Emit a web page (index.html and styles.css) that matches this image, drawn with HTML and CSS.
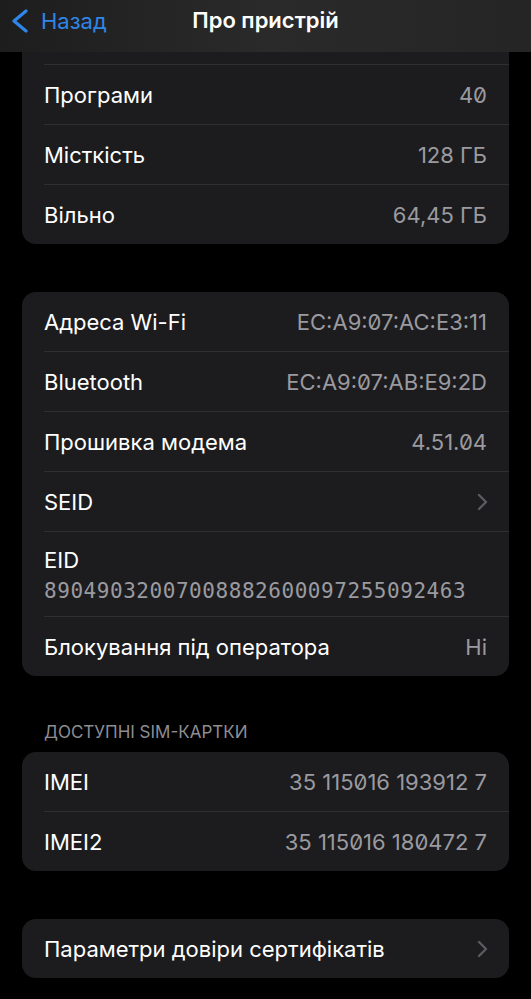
FILE: index.html
```html
<!DOCTYPE html>
<html lang="uk">
<head>
  <meta charset="UTF-8">
  <title>Про пристрій</title>
  <link rel="stylesheet" href="styles.css">
</head>
<body>
  <div class="navbar">
    <a class="back" href="#">
      <svg class="back-icon" width="18" height="24" viewBox="0 0 18 24">
        <path d="M15 2 L3 12 L15 22" fill="none" stroke="#2f86e8" stroke-width="3.2" stroke-linecap="round" stroke-linejoin="round"/>
      </svg>
      <span>Назад</span>
    </a>
    <div class="title">Про пристрій</div>
  </div>

  <div class="group first">
    <div class="stub"></div>
    <div class="row"><div class="inner"><span class="label">Програми</span><span class="value">40</span></div></div>
    <div class="row"><div class="inner"><span class="label">Місткість</span><span class="value">128 ГБ</span></div></div>
    <div class="row"><div class="inner"><span class="label">Вільно</span><span class="value">64,45 ГБ</span></div></div>
  </div>

  <div class="group">
    <div class="row"><div class="inner"><span class="label">Адреса Wi-Fi</span><span class="value">EC:A9:07:AC:E3:11</span></div></div>
    <div class="row"><div class="inner"><span class="label">Bluetooth</span><span class="value">EC:A9:07:AB:E9:2D</span></div></div>
    <div class="row"><div class="inner"><span class="label">Прошивка модема</span><span class="value">4.51.04</span></div></div>
    <div class="row"><div class="inner"><span class="label">SEID</span><span class="chevron"><svg width="12" height="18" viewBox="0 0 12 18"><path d="M3 2 L10 9 L3 16" fill="none" stroke="#5b5b60" stroke-width="2.4" stroke-linecap="round" stroke-linejoin="round"/></svg></span></div></div>
    <div class="row tall"><div class="inner stack"><span class="label">EID</span><span class="eid">89049032007008882600097255092463</span></div></div>
    <div class="row"><div class="inner"><span class="label">Блокування під оператора</span><span class="value">Ні</span></div></div>
  </div>

  <div class="section-title">ДОСТУПНІ SIM-КАРТКИ</div>
  <div class="group sim">
    <div class="row"><div class="inner"><span class="label">IMEI</span><span class="value">35 115016 193912 7</span></div></div>
    <div class="row"><div class="inner"><span class="label">IMEI2</span><span class="value">35 115016 180472 7</span></div></div>
  </div>

  <div class="group">
    <div class="row"><div class="inner"><span class="label">Параметри довіри сертифікатів</span><span class="chevron"><svg width="12" height="18" viewBox="0 0 12 18"><path d="M3 2 L10 9 L3 16" fill="none" stroke="#5b5b60" stroke-width="2.4" stroke-linecap="round" stroke-linejoin="round"/></svg></span></div></div>
  </div>
</body>
</html>
```

FILE: styles.css
```css
body {
  margin: 0;
  background-color: #000;
  font-family: Inter, "Noto Sans", sans-serif;
  color: #fff;
  width: 531px;
  height: 999px;
  overflow: hidden;
}
.navbar {
  height: 52px;
  box-sizing: border-box;
  padding-bottom: 10px;
  background: linear-gradient(90deg, #1d1d1d, #2a2a2a 50%, #252525);
  display: flex;
  align-items: center;
  position: relative;
}
.back {
  display: flex;
  align-items: center;
  gap: 12px;
  padding-left: 11px;
  color: #2f86e8;
  text-decoration: none;
  font-size: 22px;
}
.title {
  position: absolute;
  left: 0;
  right: 0;
  top: 7px;
  text-align: center;
  font-size: 22px;
  font-weight: 600;
  pointer-events: none;
}
.group {
  margin: 0 22px;
  background-color: #1c1c1e;
  border-radius: 14px;
  overflow: hidden;
}
.group + .group {
  margin-top: 48px;
}
.group.first {
  border-radius: 0 0 14px 14px;
}
.stub {
  height: 12px;
  margin-left: 22px;
  border-bottom: 1px solid #2f2f31;
}
.row {
  padding-left: 22px;
}
.inner {
  height: 59px;
  display: flex;
  align-items: center;
  justify-content: space-between;
  padding-right: 22px;
  border-bottom: 1px solid #2f2f31;
}
.row:last-child .inner {
  border-bottom: none;
  height: 59px;
}
.label {
  font-size: 22px;
}
.value {
  font-size: 22px;
  color: #9a9aa0;
  font-feature-settings: "zero";
}
.chevron {
  display: flex;
  margin-right: -1px;
}
.inner.stack {
  height: 85px;
  box-sizing: border-box;
  padding-top: 1px;
  flex-direction: column;
  align-items: flex-start;
  justify-content: center;
  gap: 6px;
}
.eid {
  font-family: "DejaVu Sans Mono", monospace;
  font-size: 21px;
  letter-spacing: 0.55px;
  color: #9a9aa0;
}
.section-title {
  margin: 46px 0 10px 44px;
  font-size: 17px;
  line-height: 20px;
  color: #8d8d93;
}
.section-title + .group {
  margin-top: 0;
}
.sim + .group {
  margin-top: 48px;
}
```
